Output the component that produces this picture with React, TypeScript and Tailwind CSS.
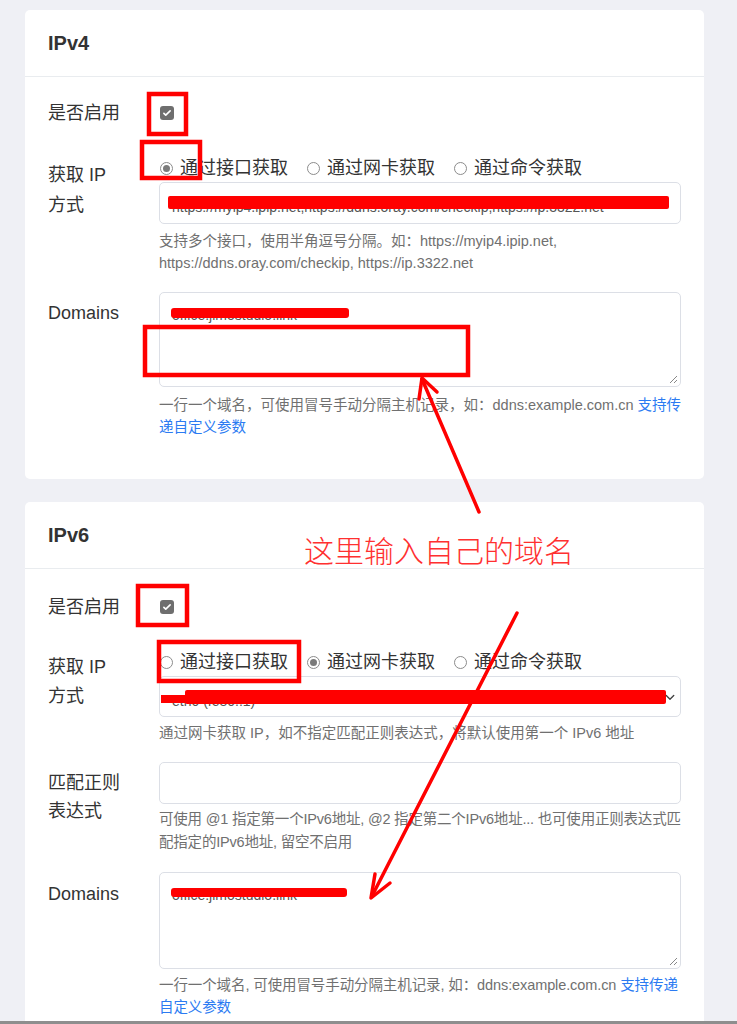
import React from "react";

function Checkbox() {
  return (
    <span className="ml-[1px] flex h-[14px] w-[14px] items-center justify-center rounded-[3px] bg-[#6e6e6e]">
      <svg viewBox="0 0 16 16" className="h-[10px] w-[10px]">
        <path d="M3 8.5l3 3 7-7" fill="none" stroke="white" strokeWidth="2.6" strokeLinecap="round" strokeLinejoin="round" />
      </svg>
    </span>
  );
}

function Radio({ checked, label }: { checked?: boolean; label: string }) {
  return (
    <span className="flex items-center gap-[7px]">
      <span className="flex h-[13px] w-[13px] items-center justify-center rounded-full border border-[#8c8c8c] bg-white">
        {checked ? <span className="h-[7px] w-[7px] rounded-full bg-[#7b7b7b]" /> : null}
      </span>
      <span>{label}</span>
    </span>
  );
}

function Radios({ which }: { which: number }) {
  return (
    <div className="ml-[1px] flex h-[24px] items-center gap-[19px] text-[18px] leading-[24px] text-[#333]">
      <Radio checked={which === 0} label="通过接口获取" />
      <Radio checked={which === 1} label="通过网卡获取" />
      <Radio checked={which === 2} label="通过命令获取" />
    </div>
  );
}

function Resize() {
  return (
    <svg viewBox="0 0 10 10" className="absolute bottom-[2px] right-[2px] h-[10px] w-[10px]">
      <path d="M9 2L2 9M9 6L6 9" stroke="#888" strokeWidth="1" fill="none" />
    </svg>
  );
}

const help = "text-[14.5px] leading-[22px] text-[#707070] whitespace-nowrap";
const label = "w-[111px] shrink-0 text-[18px] text-[#333]";

function Card1() {
  return (
    <div className="rounded-[5px] bg-white">
      <div className="flex h-[67px] items-center border-b border-[#e9ecef] px-[23px] text-[20px] font-semibold text-[#333]">
        IPv4
      </div>
      <div className="px-[23px] pb-[41px] pt-[22px]">
        <div className="flex h-[28px] items-center">
          <div className={`${label} leading-[28px]`}>是否启用</div>
          <Checkbox />
        </div>

        <div className="mt-[29px] flex">
          <div className={`${label} pt-[4px] leading-[30px]`}>
            获取 IP
            <br />
            方式
          </div>
          <div className="min-w-0 flex-1">
            <Radios which={0} />
            <div className="relative mt-[2px] flex h-[42px] items-center overflow-hidden rounded-[5px] border border-[#dcdfe6] px-[12px] text-[14px] text-[#555] whitespace-nowrap">
              <span className="pt-[8px]">https://myip4.ipip.net,https://ddns.oray.com/checkip,https://ip.3322.net</span>
              <span className="absolute left-[8px] top-[13px] h-[13px] w-[501px] rounded-[2px] bg-[#ff0000]" />
            </div>
            <div className={`mt-[6px] ${help}`}>
              <div>支持多个接口，使用半角逗号分隔。如：https://myip4.ipip.net,</div>
              <div>https://ddns.oray.com/checkip, https://ip.3322.net</div>
            </div>
          </div>
        </div>

        <div className="mt-[18px] flex">
          <div className={`${label} pt-[7px] leading-[28px]`}>Domains</div>
          <div className="min-w-0 flex-1">
            <div className="relative h-[95px] rounded-[5px] border border-[#dcdfe6] px-[12px] pt-[13px] text-[14px] leading-[18px] text-[#555]">
              <span>office.jimostudio.link</span>
              <span className="absolute left-[11px] top-[15px] h-[10px] w-[178px] rounded-[3px] bg-[#ff0000]" />
              <Resize />
            </div>
            <div className={`mt-[7px] ${help} leading-[21px]`}>
              <div>
                一行一个域名，可使用冒号手动分隔主机记录，如：ddns:example.com.cn <span className="text-[#2b7bf2]">支持传</span>
              </div>
              <div className="text-[#2b7bf2]">递自定义参数</div>
            </div>
          </div>
        </div>
      </div>
    </div>
  );
}

function Card2() {
  return (
    <div className="mt-[23px] rounded-[5px] bg-white">
      <div className="flex h-[67px] items-center border-b border-[#e9ecef] px-[23px] text-[20px] font-semibold text-[#333]">
        IPv6
      </div>
      <div className="px-[23px] pb-[39px] pt-[24px]">
        <div className="flex h-[28px] items-center">
          <div className={`${label} leading-[28px]`}>是否启用</div>
          <Checkbox />
        </div>

        <div className="mt-[29px] flex">
          <div className={`${label} pt-[3px] leading-[29px]`}>
            获取 IP
            <br />
            方式
          </div>
          <div className="min-w-0 flex-1">
            <Radios which={1} />
            <div className="relative mt-[2px] flex h-[41px] items-center overflow-hidden rounded-[5px] border border-[#dcdfe6] px-[12px] text-[14px] text-[#555] whitespace-nowrap">
              <span className="pt-[10px]">eth0 (fe80::1)</span>
              <span className="absolute left-[1px] top-[18px] h-[8px] w-[26px] bg-[#ff0000]" />
              <span className="absolute left-[25px] top-[13px] h-[14px] w-[481px] rounded-[2px] bg-[#ff0000]" />
              <svg viewBox="0 0 16 16" className="absolute right-[4px] top-[14px] h-[12px] w-[12px]">
                <path d="M3 6l5 5 5-5" fill="none" stroke="#444" strokeWidth="1.8" strokeLinecap="round" strokeLinejoin="round" />
              </svg>
            </div>
            <div className={`mt-[5px] ${help}`}>
              通过网卡获取 IP，如不指定匹配正则表达式，将默认使用第一个 IPv6 地址
            </div>
          </div>
        </div>

        <div className="mt-[18px] flex">
          <div className={`${label} pt-[7px] leading-[28px]`}>
            匹配正则
            <br />
            表达式
          </div>
          <div className="min-w-0 flex-1">
            <div className="h-[42px] rounded-[5px] border border-[#dcdfe6]" />
            <div className={`mt-[4px] ${help} leading-[23px] tracking-[-0.2px]`}>
              <div>可使用 @1 指定第一个IPv6地址, @2 指定第二个IPv6地址... 也可使用正则表达式匹</div>
              <div>配指定的IPv6地址, 留空不启用</div>
            </div>
          </div>
        </div>

        <div className="mt-[18px] flex">
          <div className={`${label} pt-[8px] leading-[28px]`}>Domains</div>
          <div className="min-w-0 flex-1">
            <div className="relative h-[97px] rounded-[5px] border border-[#dcdfe6] px-[12px] pt-[13px] text-[14px] leading-[18px] text-[#555]">
              <span>office.jimostudio.link</span>
              <span className="absolute left-[11px] top-[15px] h-[9px] w-[176px] rounded-[3px] bg-[#ff0000]" />
              <Resize />
            </div>
            <div className={`mt-[5px] ${help} leading-[21px] tracking-[-0.1px]`}>
              <div>
                一行一个域名, 可使用冒号手动分隔主机记录, 如：ddns:example.com.cn <span className="text-[#2b7bf2]">支持传递</span>
              </div>
              <div className="text-[#2b7bf2]">自定义参数</div>
            </div>
          </div>
        </div>
      </div>
    </div>
  );
}

function Annotations() {
  const red = "#ff0000";
  return (
    <>
      <svg viewBox="0 0 737 1024" className="pointer-events-none absolute left-0 top-0 h-[1024px] w-[737px]">
        <g fill="none" stroke={red} strokeWidth="4.5">
          <rect x="149" y="94" width="37" height="40" />
          <rect x="142" y="142" width="58" height="36" />
          <rect x="145" y="327" width="323" height="48" />
          <rect x="138" y="586" width="49" height="39" />
          <rect x="159" y="642" width="140" height="39" />
        </g>
        <g fill="none" stroke={red} strokeWidth="3.5" strokeLinecap="round" strokeLinejoin="round">
          <path d="M479 512L422 379" />
          <path d="M419 399L422 378L437 392" />
          <path d="M517 613L372 896" />
          <path d="M375 874L371 898L390 883" />
        </g>
      </svg>
      <div className="pointer-events-none absolute left-[304px] top-[532px] whitespace-nowrap text-[30px] font-light leading-[34px] text-[#ff3030] font-['Noto_Sans_CJK_SC',sans-serif]">
        这里输入自己的域名
      </div>
    </>
  );
}

export default function App() {
  return (
    <div className="relative flex h-[1024px] w-[737px] flex-col overflow-hidden bg-[#eff0f5] font-['Liberation_Sans','Noto_Sans_CJK_SC',sans-serif]">
      <div className="min-h-0 flex-1 overflow-hidden pl-[25px] pr-[33px] pt-[10px]">
        <Card1 />
        <Card2 />
      </div>
      <div className="h-[3px] shrink-0 bg-[#8e8e8e]" />
      <Annotations />
    </div>
  );
}
